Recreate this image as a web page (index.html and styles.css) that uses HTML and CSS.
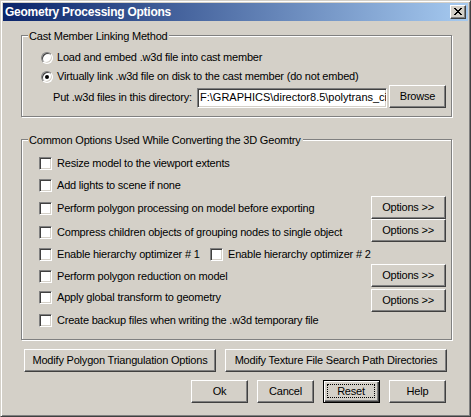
FILE: index.html
```
<!DOCTYPE html>
<html>
<head>
<meta charset="utf-8">
<title>Geometry Processing Options</title>
<link rel="stylesheet" href="styles.css">
</head>
<body>
<div class="window">
  <div class="titlebar">
    <span class="title">Geometry Processing Options</span>
    <span class="close">
      <svg width="8" height="7" viewBox="0 0 8 7" shape-rendering="crispEdges">
        <rect x="0" y="0" width="2" height="1"/><rect x="6" y="0" width="2" height="1"/>
        <rect x="1" y="1" width="2" height="1"/><rect x="5" y="1" width="2" height="1"/>
        <rect x="2" y="2" width="4" height="1"/>
        <rect x="3" y="3" width="2" height="1"/>
        <rect x="2" y="4" width="4" height="1"/>
        <rect x="1" y="5" width="2" height="1"/><rect x="5" y="5" width="2" height="1"/>
        <rect x="0" y="6" width="2" height="1"/><rect x="6" y="6" width="2" height="1"/>
      </svg>
    </span>
  </div>
  <div class="body">
    <div class="group g1">
      <div class="legend">Cast Member Linking Method</div>
      <div class="radio-row r1"><span class="radio"></span><span class="label">Load and embed .w3d file into cast member</span></div>
      <div class="radio-row r2"><span class="radio checked"></span><span class="label">Virtually link .w3d file on disk to the cast member (do not embed)</span></div>
      <div class="dir-row">
        <span class="dir-label">Put .w3d files in this directory:</span>
        <div class="field"><span class="field-text">F:\GRAPHICS\director8.5\polytrans_ci</span></div>
        <div class="btn browse">Browse</div>
      </div>
    </div>

    <div class="group g2">
      <div class="legend">Common Options Used While Converting the 3D Geomtry</div>
      <div class="options-grid">
        <div class="checks">
          <div class="check-row"><span class="check"></span><span class="label">Resize model to the viewport extents</span></div>
          <div class="check-row"><span class="check"></span><span class="label">Add lights to scene if none</span></div>
          <div class="check-row"><span class="check"></span><span class="label">Perform polygon processing on model before exporting</span></div>
          <div class="check-row"><span class="check"></span><span class="label">Compress children objects of grouping nodes to single object</span></div>
          <div class="check-row">
            <div class="check-item"><span class="check"></span><span class="label">Enable hierarchy optimizer # 1</span></div>
            <div class="check-item"><span class="check"></span><span class="label">Enable hierarchy optimizer # 2</span></div>
          </div>
          <div class="check-row"><span class="check"></span><span class="label">Perform polygon reduction on model</span></div>
          <div class="check-row"><span class="check"></span><span class="label">Apply global transform to geometry</span></div>
          <div class="check-row"><span class="check"></span><span class="label">Create backup files when writing the .w3d temporary file</span></div>
        </div>
        <div class="opt-buttons">
          <div class="btn opt">Options &gt;&gt;</div>
          <div class="btn opt">Options &gt;&gt;</div>
          <div class="btn opt">Options &gt;&gt;</div>
          <div class="btn opt">Options &gt;&gt;</div>
        </div>
      </div>
    </div>

    <div class="row-modify">
      <div class="btn wide1">Modify Polygon Triangulation Options</div>
      <div class="btn wide2">Modify Texture File Search Path Directories</div>
    </div>

    <div class="row-actions">
      <div class="btn act">Ok</div>
      <div class="btn act">Cancel</div>
      <div class="btn act default"><span class="focus">Reset</span></div>
      <div class="btn act">Help</div>
    </div>
  </div>
</div>
</body>
</html>
```

FILE: styles.css
```
* { box-sizing: border-box; }

html, body {
  margin: 0;
  padding: 0;
  background: #d4d0c8;
}

body {
  font-family: "Liberation Sans", Arial, sans-serif;
  font-size: 11px;
  letter-spacing: -0.2px;
  color: #000;
  line-height: 13px;
}

.window {
  width: 471px;
  height: 417px;
  background: #d4d0c8;
  border: 1px solid;
  border-color: #d4d0c8 #404040 #404040 #d4d0c8;
  box-shadow: inset 1px 1px 0 #fff, inset -1px -1px 0 #808080;
  padding: 2px;
}

/* ---------- title bar ---------- */
.titlebar {
  height: 18px;
  background: linear-gradient(to right, #0a246a, #a6caf0);
  display: flex;
  align-items: center;
  justify-content: space-between;
  padding: 0 2px 0 2px;
}

.title {
  color: #fff;
  font-weight: bold;
  font-size: 12px;
  letter-spacing: -0.25px;
  line-height: 18px;
}

.close {
  width: 16px;
  height: 14px;
  background: #d4d0c8;
  border: 1px solid;
  border-color: #fff #404040 #404040 #fff;
  box-shadow: inset -1px -1px 0 #808080;
  display: flex;
  align-items: center;
  justify-content: center;
  padding: 0 1px 1px 0;
}

.close svg { display: block; fill: #000; }

/* ---------- body ---------- */
.body {
  padding: 0 16px 0 18px;
}

.group {
  position: relative;
  width: 431px;
  border: 1px solid #808080;
  box-shadow: inset 1px 1px 0 #fff, 1px 1px 0 #fff;
}

.legend {
  position: absolute;
  top: -6px;
  left: 6px;
  padding: 0 2px 0 1px;
  background: #d4d0c8;
  white-space: nowrap;
}

/* group 1 */
.g1 {
  margin-top: 14px;
  height: 82px;
  padding: 15px 0 0 19px;
}

.radio-row {
  display: flex;
  align-items: flex-start;
  height: 13px;
}

.radio-row.r2 { margin-top: 6px; }

.radio {
  width: 12px;
  height: 12px;
  margin-top: 1px;
  border-radius: 50%;
  background: #fff;
  border: 1px solid;
  border-color: #808080 #fff #fff #808080;
  box-shadow: inset 1px 1px 0 #404040, inset -1px -1px 0 #d4d0c8;
  position: relative;
  flex: none;
}

.radio.checked::after {
  content: "";
  position: absolute;
  left: 3px;
  top: 3px;
  width: 4px;
  height: 4px;
  border-radius: 50%;
  background: #000;
}

.radio-row .label { margin-left: 4px; white-space: nowrap; }

.dir-row {
  display: flex;
  align-items: flex-start;
  margin-top: 2px;
  margin-left: 12px;
  height: 23px;
}

.dir-label {
  width: 144px;
  margin-top: 6px;
  white-space: nowrap;
}

.field {
  width: 190px;
  height: 20px;
  margin-top: 3px;
  margin-right: 2px;
  background: #fff;
  border: 1px solid;
  border-color: #808080 #fff #fff #808080;
  box-shadow: inset 1px 1px 0 #404040, inset -1px -1px 0 #d4d0c8;
  padding: 2px 0 0 2px;
  overflow: hidden;
  white-space: nowrap;
  letter-spacing: 0;
}

/* buttons */
.btn {
  height: 23px;
  background: #d4d0c8;
  border: 1px solid;
  border-color: #fff #404040 #404040 #fff;
  box-shadow: inset -1px -1px 0 #808080;
  display: flex;
  align-items: center;
  justify-content: center;
  white-space: nowrap;
  padding-bottom: 1px;
  flex: none;
}

.browse { width: 57px; }

/* group 2 */
.g2 {
  margin-top: 22px;
  height: 201px;
  padding: 17px 14px 0 17px;
}

.options-grid {
  display: grid;
  grid-template-columns: 1fr 75px;
}

.checks { display: flex; flex-direction: column; }

.check-row {
  display: flex;
  align-items: flex-start;
  height: 13px;
  white-space: nowrap;
}

.check-row:nth-child(2) { margin-top: 9px; }
.check-row:nth-child(3) { margin-top: 10px; }
.check-row:nth-child(4) { margin-top: 11px; }
.check-row:nth-child(5) { margin-top: 9px; }
.check-row:nth-child(6) { margin-top: 9px; }
.check-row:nth-child(7) { margin-top: 8px; }
.check-row:nth-child(8) { margin-top: 10px; }

.check-item {
  display: flex;
  align-items: flex-start;
}

.check-item:first-child { width: 171px; }

.check {
  width: 13px;
  height: 13px;
  background: #fff;
  border: 1px solid;
  border-color: #808080 #fff #fff #808080;
  box-shadow: inset 1px 1px 0 #404040, inset -1px -1px 0 #d4d0c8;
  flex: none;
}

.check-row .label { margin-left: 5px; }

.opt-buttons {
  display: flex;
  flex-direction: column;
}

.opt { width: 75px; }
.opt:nth-child(1) { margin-top: 39px; }
.opt:nth-child(2) { margin-top: 0; }
.opt:nth-child(3) { margin-top: 22px; }
.opt:nth-child(4) { margin-top: 2px; }

/* bottom rows */
.row-modify {
  display: flex;
  gap: 9px;
  margin: 9px 0 0 3px;
}

.wide1 { width: 192px; }
.wide2 { width: 222px; }

.row-actions {
  display: flex;
  justify-content: flex-end;
  gap: 9px;
  margin-top: 8px;
  padding-right: 6px;
}

.act { width: 57px; }

.act.default {
  border: 1px solid #000;
  box-shadow: inset 1px 1px 0 #fff, inset -1px -1px 0 #404040, inset -2px -2px 0 #808080;
  padding: 3px 4px 4px 3px;
}

.focus {
  flex: 1;
  align-self: stretch;
  border: 1px dotted #000;
  display: flex;
  align-items: center;
  justify-content: center;
}
```
